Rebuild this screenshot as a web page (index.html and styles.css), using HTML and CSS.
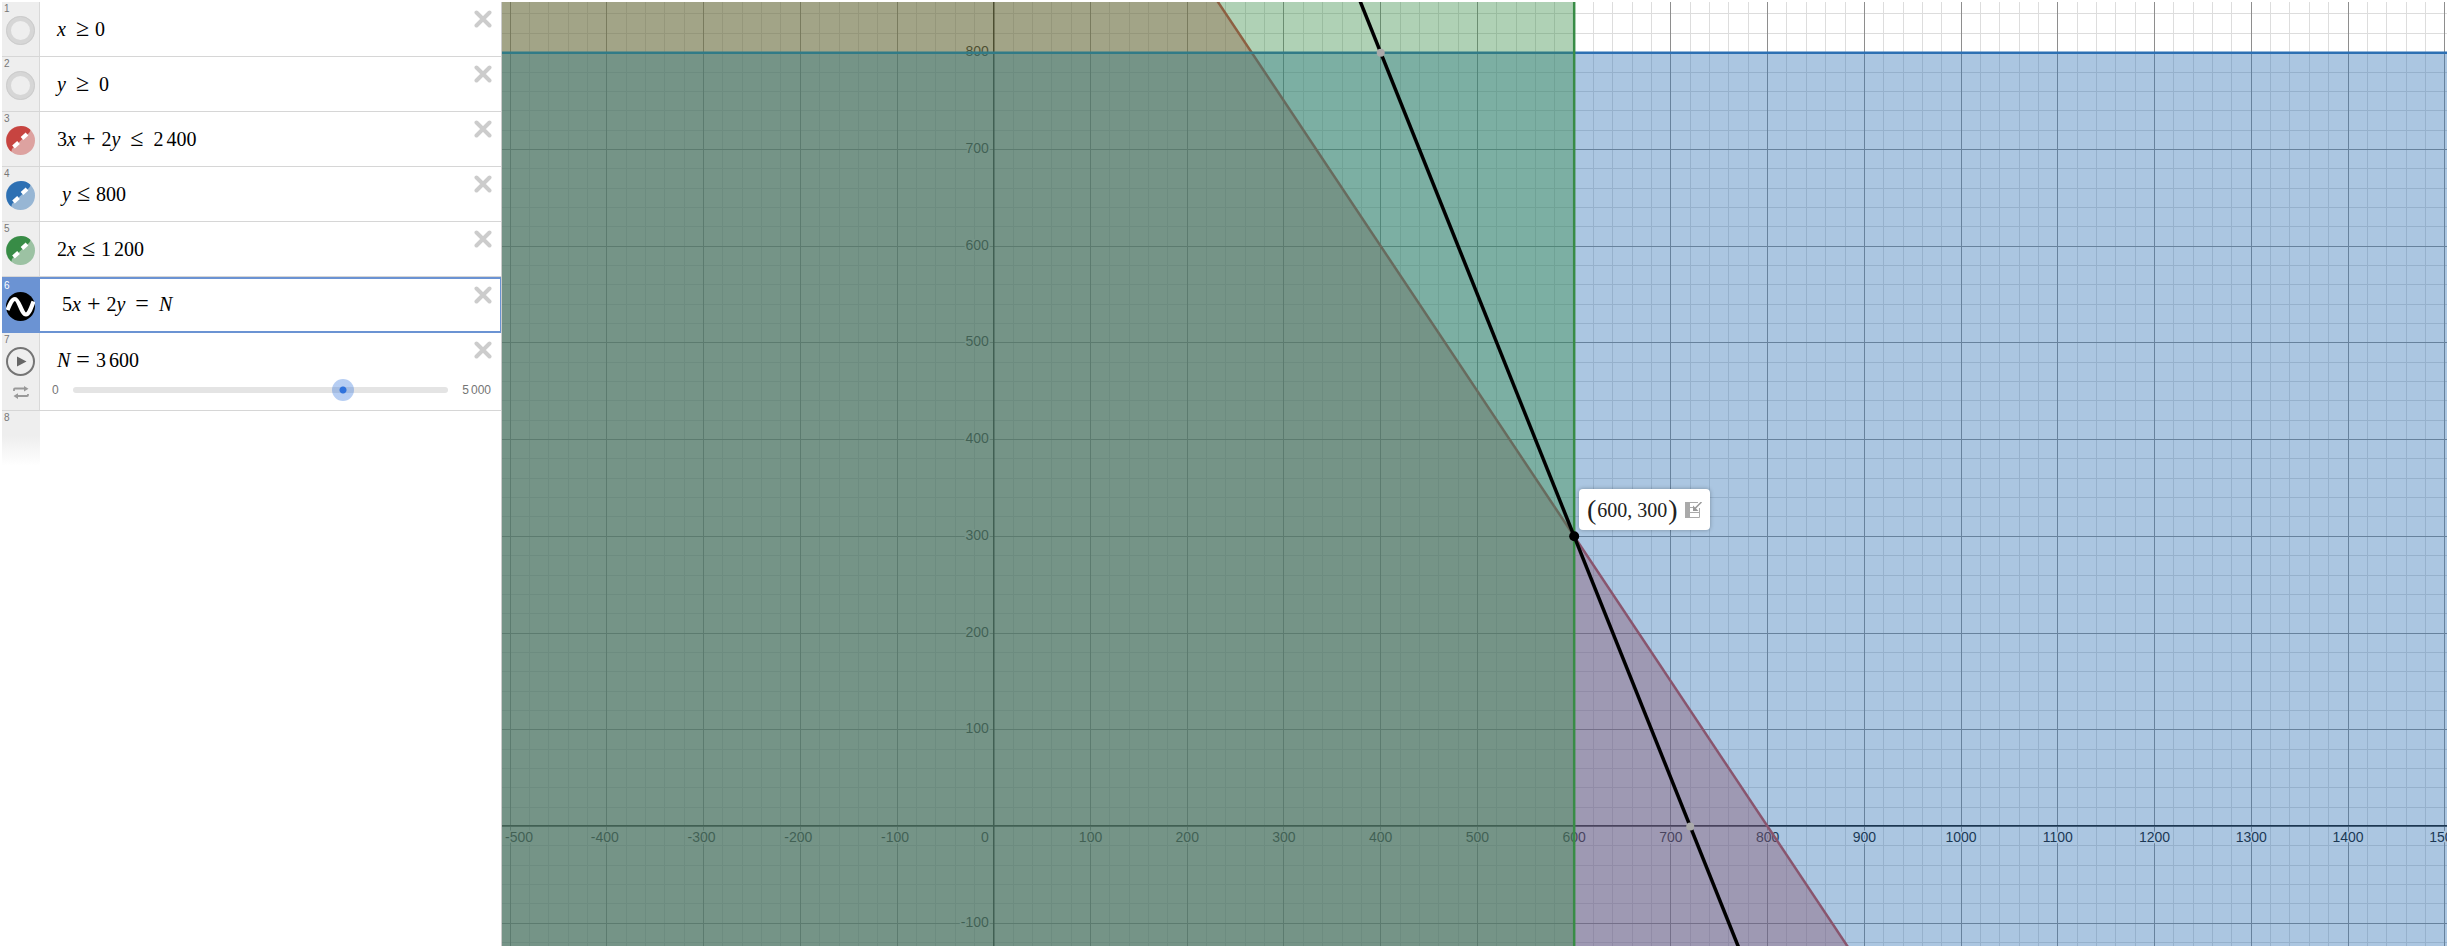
FILE: index.html
```html
<!DOCTYPE html>
<html lang="en">
<head>
<meta charset="utf-8">
<title>Graphing calculator</title>
<link rel="stylesheet" href="styles.css">
</head>
<body>
<svg class="defs" width="0" height="0" aria-hidden="true">
  <symbol id="close" viewBox="0 0 18 18"><path d="M2.5 2.5 15.5 15.5M15.5 2.5 2.5 15.5" fill="none" stroke="currentColor" stroke-width="4" stroke-linecap="round"/></symbol>
  <symbol id="hidden" viewBox="0 0 29 29"><circle cx="14.5" cy="14.5" r="12" fill="#eee" stroke="#d6d6d6" stroke-width="5"/><circle cx="14.5" cy="14.5" r="14" fill="none" stroke="#ccc" stroke-width="1"/></symbol>
  <symbol id="shade" viewBox="0 0 29 29">
    <circle cx="14.5" cy="14.5" r="14.5" fill="currentColor" opacity=".45"/>
    <path d="M5.5 25.8A14.5 14.5 0 1 1 24.2 3.5Q25 6 20.5 9L9 20Q5 23 5.5 25.8Z" fill="currentColor"/>
    <path d="M7.5 21 12.5 16.5M16 12.5 21 8" fill="none" stroke="#fff" stroke-width="4"/>
  </symbol>
  <symbol id="wave" viewBox="0 0 29 29"><circle cx="14.5" cy="14.5" r="14.5"/><path d="M1.5 18C4 12 6 7 9 7C13 7 15.500 22.500 20 22.500C23 22.500 25 16 27.500 9.500" fill="none" stroke="#fff" stroke-width="4.200"/></symbol>
  <symbol id="play" viewBox="0 0 29 29"><circle cx="14.5" cy="14.5" r="13.5" fill="none" stroke="#757575" stroke-width="2"/><path d="M11 9.5V19.5L20.5 14.5Z" fill="#666"/></symbol>
  <symbol id="loop" viewBox="0 0 16 13"><path d="M1 5V3.5Q1 2.5 2 2.5H12M15 8V9Q15 10 14 10H4" fill="none" stroke="#999" stroke-width="1.8"/><path d="M11 0V5.5L15.5 2.7ZM5 7.3V13L.5 10Z" fill="#999"/></symbol>
</svg>
<main class="calculator">
  <section class="panel" aria-label="Expressions">
    <ol class="list">
      <li class="row">
        <div class="gutter"><span class="index">1</span><button class="chip" aria-label="Show expression 1"><svg><use href="#hidden"/></svg></button></div>
        <div class="math"><i>x</i><span class="op before">≥</span>0</div>
        <button class="close" aria-label="Delete expression 1"><svg><use href="#close"/></svg></button>
      </li>
      <li class="row">
        <div class="gutter"><span class="index">2</span><button class="chip" aria-label="Show expression 2"><svg><use href="#hidden"/></svg></button></div>
        <div class="math"><i>y</i><span class="op before after">≥</span>0</div>
        <button class="close" aria-label="Delete expression 2"><svg><use href="#close"/></svg></button>
      </li>
      <li class="row">
        <div class="gutter"><span class="index">3</span><button class="chip red" aria-label="Hide expression 3"><svg><use href="#shade"/></svg></button></div>
        <div class="math">3<i>x</i><span class="op">+</span>2<i>y</i><span class="op before after">≤</span>2<span class="group">400</span></div>
        <button class="close" aria-label="Delete expression 3"><svg><use href="#close"/></svg></button>
      </li>
      <li class="row">
        <div class="gutter"><span class="index">4</span><button class="chip blue" aria-label="Hide expression 4"><svg><use href="#shade"/></svg></button></div>
        <div class="math lead"><i>y</i><span class="op">≤</span>800</div>
        <button class="close" aria-label="Delete expression 4"><svg><use href="#close"/></svg></button>
      </li>
      <li class="row">
        <div class="gutter"><span class="index">5</span><button class="chip green" aria-label="Hide expression 5"><svg><use href="#shade"/></svg></button></div>
        <div class="math">2<i>x</i><span class="op">≤</span>1<span class="group">200</span></div>
        <button class="close" aria-label="Delete expression 5"><svg><use href="#close"/></svg></button>
      </li>
      <li class="row selected">
        <div class="gutter"><span class="index">6</span><button class="chip" aria-label="Hide expression 6"><svg><use href="#wave"/></svg></button></div>
        <div class="math lead">5<i>x</i><span class="op">+</span>2<i>y</i><span class="op before after">=</span><i>N</i></div>
        <button class="close" aria-label="Delete expression 6"><svg><use href="#close"/></svg></button>
      </li>
      <li class="row slider-row">
        <div class="gutter"><span class="index">7</span><button class="chip" aria-label="Play slider"><svg><use href="#play"/></svg></button><button class="loop" aria-label="Loop mode"><svg><use href="#loop"/></svg></button></div>
        <div class="content">
          <div class="math"><i>N</i><span class="op">=</span>3<span class="group">600</span></div>
          <div class="slider"><span>0</span><div class="track"><input type="range" min="0" max="5000" value="3600" aria-label="N"></div><span>5<span class="group">000</span></span></div>
        </div>
        <button class="close" aria-label="Delete expression 7"><svg><use href="#close"/></svg></button>
      </li>
      <li class="row next"><div class="gutter"><span class="index">8</span></div></li>
    </ol>
  </section>
  <section class="graph" aria-label="Graph">
    <svg class="plot" id="plot"></svg>
    <div class="tip" id="tip"><span class="paren">(</span><span>600, 300</span><span class="paren">)</span>
      <button class="add" aria-label="Add point to list"><svg viewBox="0 0 17 16"><path d="M0 0H5V16H0Z" fill="#aaa"/><path d="M5 .5H13M5 15.5H14.5V6M5 5.5H8M5 10.5H14" fill="none" stroke="#aaa"/><path d="M16.5 0 9 7.5" stroke="#999" stroke-width="1.5"/><path d="M8 3.5V9H13.5Z" fill="#999"/></svg></button>
    </div>
  </section>
</main>
<script src="graph.js"></script>
</body>
</html>
```
FILE: styles.css
```css
* { box-sizing: border-box; }
body { margin: 0; background: #fff; font-family: "Liberation Sans", Arial, sans-serif; }
button { padding: 0; border: 0; background: none; cursor: pointer; }
svg { display: block; }
button svg { width: 100%; height: 100%; }
.defs { position: absolute; }
.calculator { display: flex; height: 100vh; padding: 2px; }
.panel { flex: 0 0 500px; border-right: 1px solid #ccc; }
.list { margin: 0; padding: 0; list-style: none; }
.row { display: flex; min-height: 55px; border-bottom: 1px solid #d6d6d6; color: #000; }
.gutter { position: relative; flex: 0 0 38px; display: flex; flex-direction: column; align-items: center; padding-top: 14px; background: #eee; border-right: 1px solid #d9d9d9; }
.index { position: absolute; left: 2px; top: 1px; font-size: 10px; line-height: 12px; color: #777; }
.chip { width: 29px; height: 29px; color: #000; }
.red { color: #c74440; }
.blue { color: #2d70b3; }
.green { color: #388c46; }
.loop { width: 16px; height: 13px; margin-top: 10px; }
.math { flex: 1; padding: 13px 0 0 17px; font-family: "Liberation Serif", "Times New Roman", serif; font-size: 20px; line-height: 28px; white-space: nowrap; }
.lead { padding-left: 22px; }
.op { margin: 0 6px; font-size: 24px; line-height: 20px; }
.before { margin-left: 10px; }
.after { margin-right: 10px; }
.group { margin-left: 2px; }
.math .group { margin-left: 3px; }
.close { flex: none; width: 18px; height: 18px; margin: 8px 9px 0 0; color: #ccc; }
.selected { min-height: 56px; border: 2px solid #6b93d3; border-width: 2px 1px 2px 0; }
.selected .gutter { padding-top: 13px; background: #6b93d3; border-color: #6b93d3; }
.selected .math { padding-top: 11px; }
.selected .index { color: #fff; }
.selected .close { margin: 7px 8px 0 0; }
.slider-row { position: relative; min-height: 78px; }
.content { flex: 1; }
.slider-row .close { position: absolute; right: 0; }
.slider { display: flex; align-items: center; gap: 14px; padding: 7px 10px 0 12px; font-size: 12px; line-height: 18px; color: #757575; }
.track { flex: 1; display: flex; align-items: center; height: 6px; border-radius: 3px; background: #e4e4e4; }
.track input { flex: 1; min-width: 0; height: 22px; margin: 0 -11px; appearance: none; background: none; }
.track input::-webkit-slider-thumb { appearance: none; width: 22px; height: 22px; border-radius: 50%; background: radial-gradient(circle, #2f72dc 3px, rgba(47, 114, 220, .35) 4px); }
.next { border: 0; }
.next .gutter { min-height: 52px; border: 0; background: linear-gradient(#eee 45%, #fff); }
.graph { position: relative; flex: 1; min-width: 0; overflow: hidden; }
.plot { width: 100%; height: 100%; }
.minor { fill: #ddd; }
.major { fill: #8e8e8e; }
.axis { fill: #111; }
.label { font-size: 14px; fill: #111; stroke: #fff; stroke-width: 3px; paint-order: stroke; stroke-linejoin: round; }
.line { fill: none; stroke: currentColor; stroke-width: 2.5px; }
.region { fill: currentColor; opacity: .4; }
.target { stroke-width: 3.5px; }
.mark { fill: #aaa; }
.tip { position: absolute; display: flex; align-items: center; height: 41px; padding: 0 8px; border-radius: 4px; background: #fff; box-shadow: 0 0 4px rgba(0, 0, 0, .3); font-family: "Liberation Serif", "Times New Roman", serif; font-size: 20px; line-height: 28px; color: #222; white-space: nowrap; }
.tip span { margin-right: 1px; }
.paren { font-size: 28px; }
.add { width: 17px; height: 16px; margin-left: 6px; }
```
FILE: graph.js
```js
const plot = document.getElementById('plot');
const tip = document.getElementById('tip');
const unit = 0.9673;
const originX = 491.8;
const originY = 824.5;
const px = x => originX + x * unit;
const py = y => originY - y * unit;

function draw() {
  const { width: w, height: h } = plot.getBoundingClientRect();
  const minX = Math.ceil(-originX / unit / 20) * 20;
  const maxX = (w - originX) / unit;
  const minY = Math.ceil((originY - h) / unit / 20) * 20;
  const maxY = originY / unit;
  let minor = '', major = '', labels = '';

  for (let x = minX; x <= maxX; x += 20) {
    const at = Math.floor(px(x));
    const big = x % 100 === 0;
    const rect = `<rect class="${big ? 'major' : 'minor'}" x="${at}" y="0" width="1" height="${h}"/>`;
    if (big) major += rect; else minor += rect;
    if (big && x !== 0) {
      const center = Math.max(px(x) - (x < 0 ? 2 : 0), 17);
      labels += `<text class="label" x="${center}" y="${originY + 15.5}" text-anchor="middle">${x}</text>`;
    }
  }
  for (let y = minY; y <= maxY; y += 20) {
    const at = Math.floor(py(y));
    const big = y % 100 === 0;
    const rect = `<rect class="${big ? 'major' : 'minor'}" x="0" y="${at}" width="${w}" height="1"/>`;
    if (big) major += rect; else minor += rect;
    if (big && y !== 0) labels += `<text class="label" x="${originX - 5}" y="${at + 4}" text-anchor="end">${y}</text>`;
  }
  labels += `<text class="label" x="${originX - 5}" y="${originY + 15.5}" text-anchor="end">0</text>`;
  const axes = `<rect class="axis" x="${Math.floor(originX)}" y="0" width="1.5" height="${h}"/>
    <rect class="axis" x="0" y="${Math.floor(originY) - 1}" width="${w}" height="1.5"/>`;

  // 3x + 2y = 2400 and 5x + 2y = 3600, extended past both edges
  const line = (a, b) => [1200, -400].map(y => `${px((b - 2 * y) / a)} ${py(y)}`);
  const red = line(3, 2400);
  const goal = line(5, 3600);
  const top = py(800);
  const right = px(600);

  plot.innerHTML = minor + major + axes + labels +
    `<g class="red"><path class="region" d="M${red[0]}L${red[1]}L-900 ${py(-400)}L-900 ${py(1200)}Z"/><path class="line" d="M${red[0]}L${red[1]}"/></g>
    <g class="blue"><rect class="region" x="0" y="${top}" width="${w}" height="${h - top}"/><path class="line" d="M0 ${top}H${w}"/></g>
    <g class="green"><rect class="region" x="0" y="0" width="${right}" height="${h}"/><path class="line" d="M${right} 0V${h}"/></g>
    <path class="line target" d="M${goal[0]}L${goal[1]}"/>
    <circle class="mark" cx="${px(400)}" cy="${top}" r="4"/>
    <circle class="mark" cx="${px(720)}" cy="${py(0)}" r="4"/>
    <circle cx="${right}" cy="${py(300)}" r="5"/>`;
  tip.style.left = `${Math.round(right + 5)}px`;
  tip.style.top = `${Math.round(py(300) - 47)}px`;
}

draw();
window.addEventListener('resize', draw);
```
